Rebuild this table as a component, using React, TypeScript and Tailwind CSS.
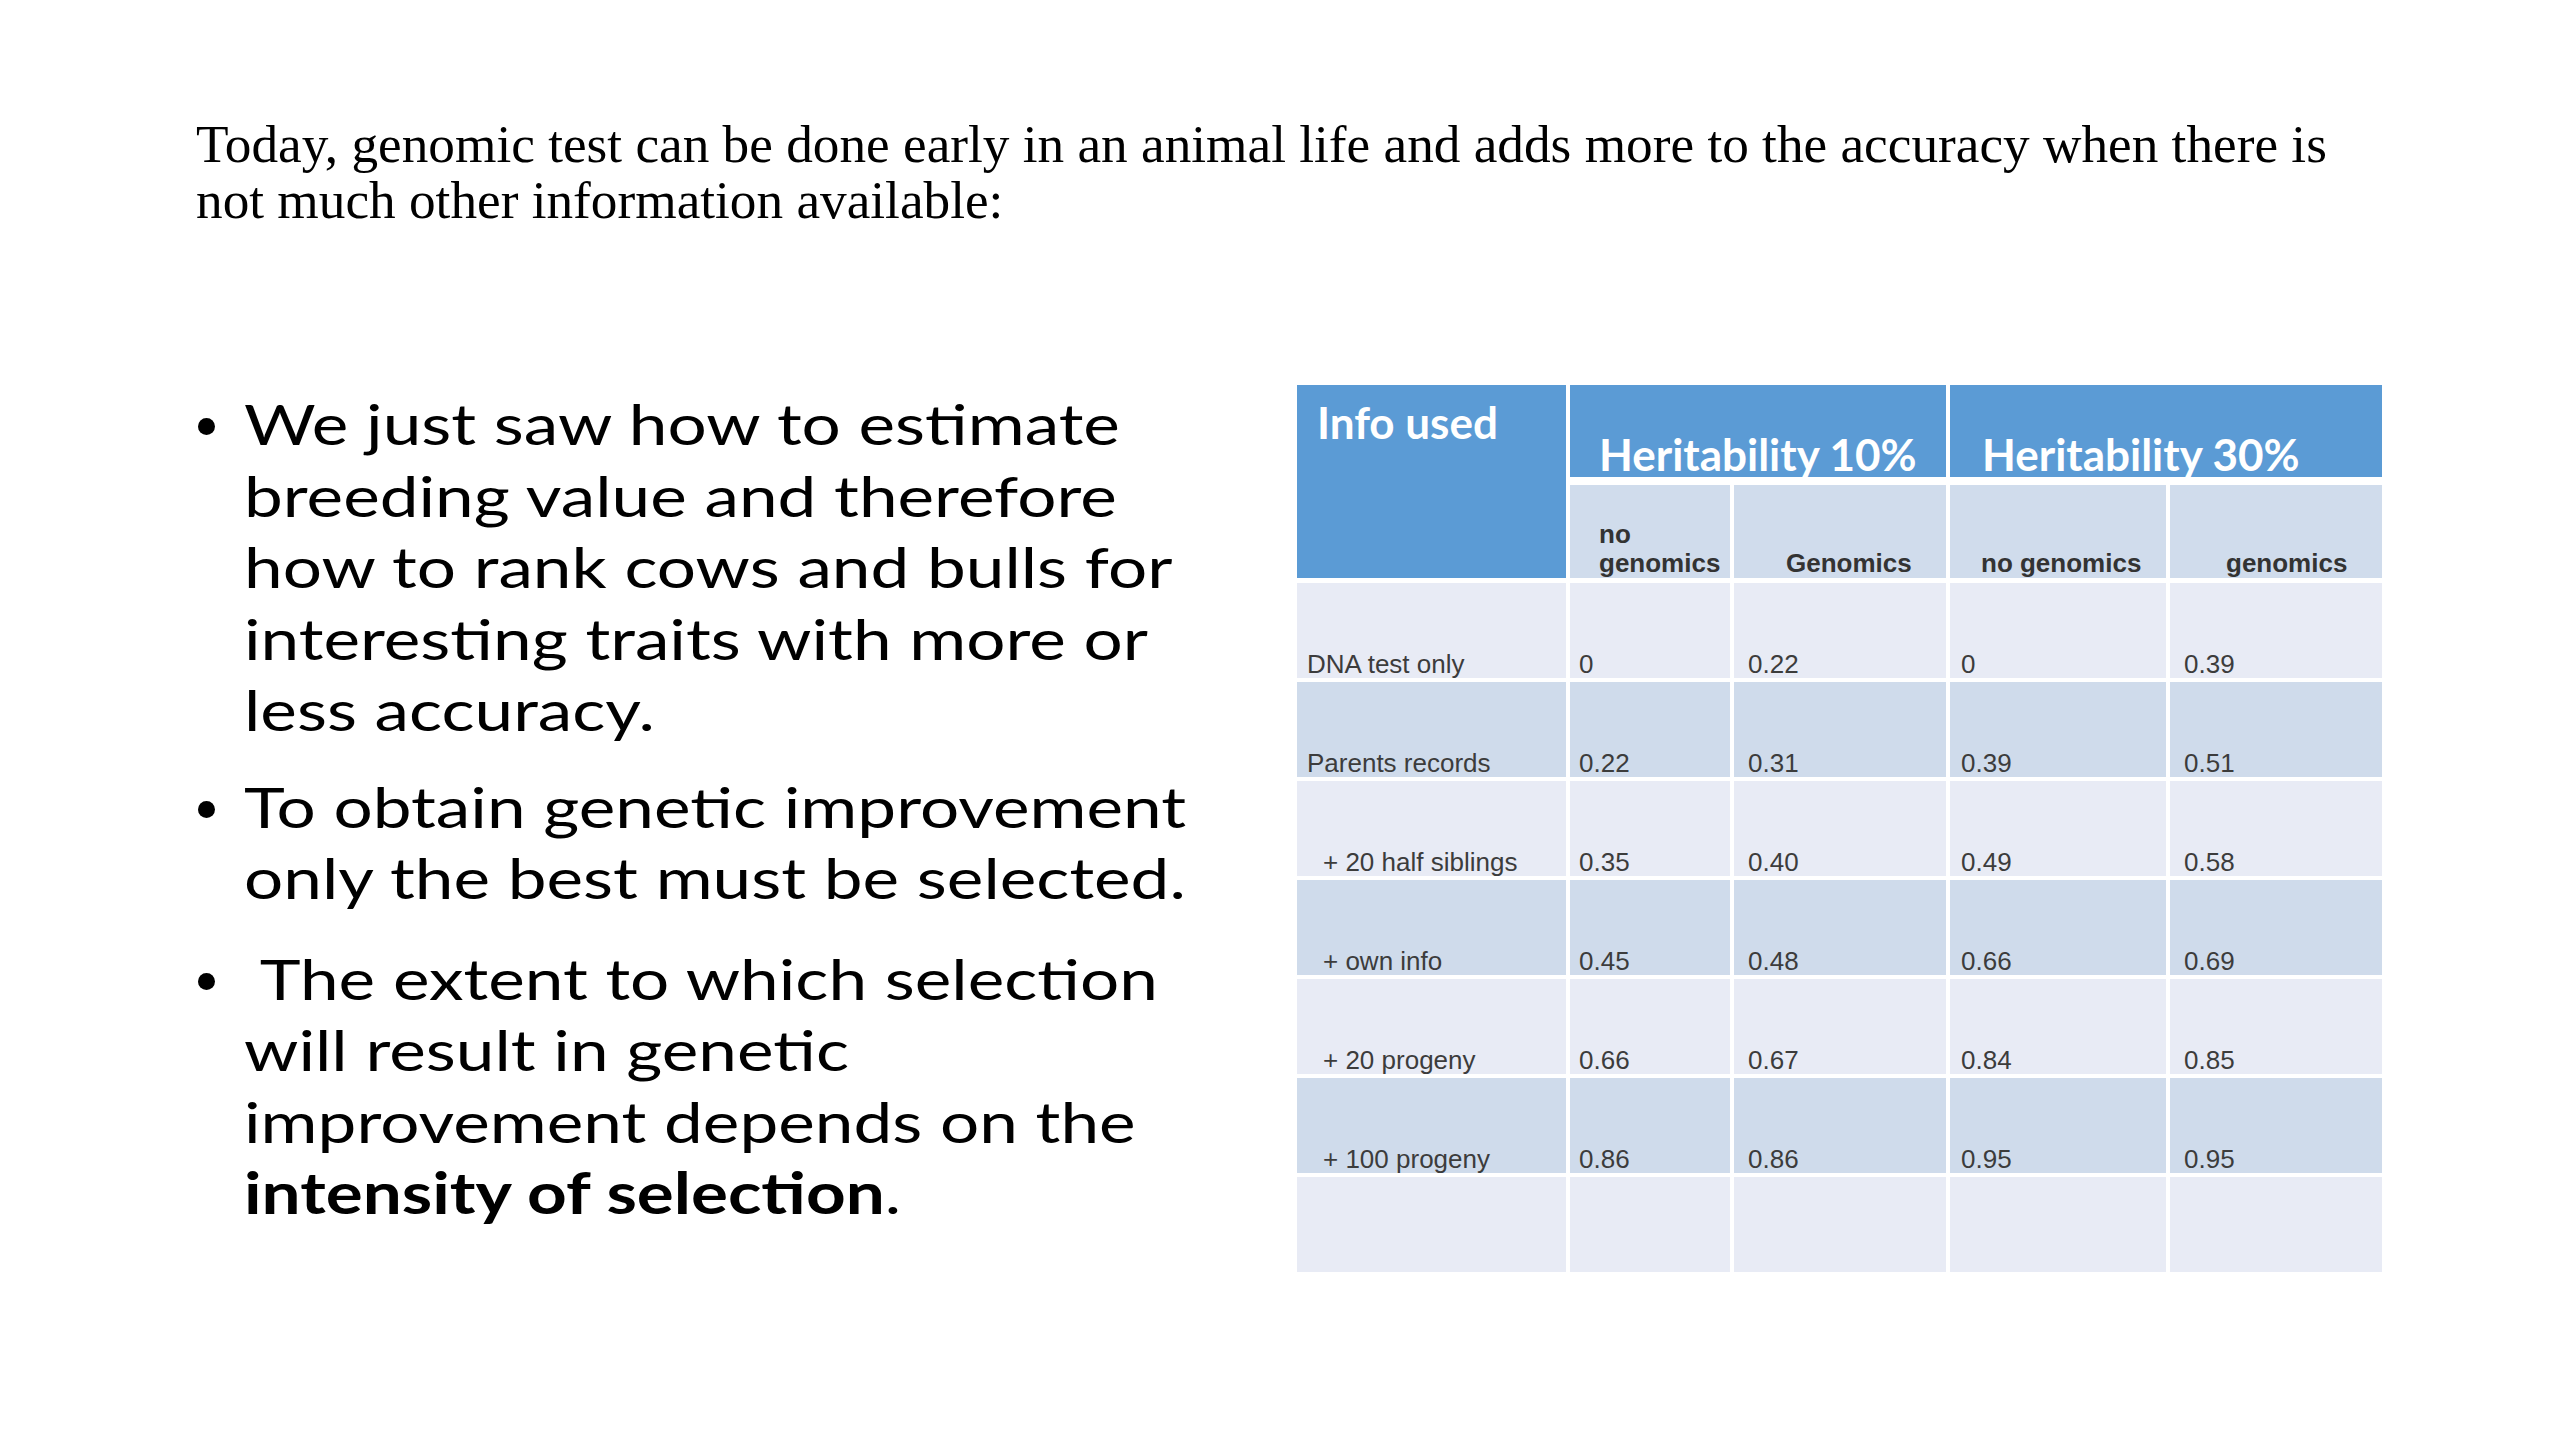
import React from 'react';

type Row = { label: string; indent?: boolean; values: string[]; shade: 'light' | 'dark' };

const rows: Row[] = [
  { label: 'DNA test only', values: ['0', '0.22', '0', '0.39'], shade: 'light' },
  { label: 'Parents records', values: ['0.22', '0.31', '0.39', '0.51'], shade: 'dark' },
  { label: '+ 20 half siblings', indent: true, values: ['0.35', '0.40', '0.49', '0.58'], shade: 'light' },
  { label: '+ own info', indent: true, values: ['0.45', '0.48', '0.66', '0.69'], shade: 'dark' },
  { label: '+ 20 progeny', indent: true, values: ['0.66', '0.67', '0.84', '0.85'], shade: 'light' },
  { label: '+ 100 progeny', indent: true, values: ['0.86', '0.86', '0.95', '0.95'], shade: 'dark' },
  { label: '', values: ['', '', '', ''], shade: 'light' },
];

// left padding of each value column, taken from the slide
const valuePad = ['pl-[9px]', 'pl-[14px]', 'pl-[11px]', 'pl-[14px]'];

const calibri = "font-['Lato','Noto_Sans',sans-serif]";
const helvetica = "font-['Liberation_Sans','Arial',sans-serif]";

function Bullet({ children, className = '' }: { children: React.ReactNode; className?: string }) {
  return (
    <li className={`flex ${className}`}>
      <div className="w-[46px] shrink-0">
        <div className="mt-[30px] h-[17px] w-[17px] rounded-full bg-black" />
      </div>
      {/* the slide's body text is set wide, so stretch it a little */}
      <div className="flex origin-left scale-x-[1.215] flex-col">{children}</div>
    </li>
  );
}

function Line({ children }: { children: React.ReactNode }) {
  return <span className="block whitespace-nowrap">{children}</span>;
}

function AccuracyTable() {
  return (
    <div className={`${helvetica} w-[1085px] shrink-0`}>
      {/* header */}
      <div className="grid grid-cols-[269px_160px_212px_216px_212px] grid-rows-[92px_93px] gap-x-[4px] gap-y-[8px]">
        <div className={`${calibri} row-span-2 bg-[#5b9bd5] pl-[20px] pt-[13px] text-[44px] font-bold leading-[48px] text-white`}>
          Info used
        </div>
        <div className={`${calibri} relative z-10 col-span-2 flex items-end bg-[#5b9bd5] pl-[29px] text-[44px] font-bold leading-[48px] text-white`}>
          <span className="translate-y-[1px] whitespace-nowrap">Heritability 10%</span>
        </div>
        <div className={`${calibri} relative z-10 col-span-2 flex items-end bg-[#5b9bd5] pl-[32px] text-[44px] font-bold leading-[48px] text-white`}>
          <span className="translate-y-[1px] whitespace-nowrap">Heritability 30%</span>
        </div>
        <div className="flex items-end bg-[#d0dcec] pl-[29px] text-[26px] font-bold leading-[29px] text-[#333]">
          <span>
            no
            <br />
            genomics
          </span>
        </div>
        <div className="flex items-end bg-[#d0dcec] pl-[52px] text-[26px] font-bold leading-[29px] text-[#333]">
          Genomics
        </div>
        <div className="flex items-end bg-[#d0dcec] pl-[31px] text-[26px] font-bold leading-[29px] text-[#333]">
          no genomics
        </div>
        <div className="flex items-end bg-[#d0dcec] pl-[56px] text-[26px] font-bold leading-[29px] text-[#333]">
          genomics
        </div>
      </div>

      {/* body */}
      <div className="mt-[5px] grid grid-cols-[269px_160px_212px_216px_212px] auto-rows-[95px] gap-x-[4px] gap-y-[4px]">
        {rows.map((row, i) => {
          const bg = row.shade === 'light' ? 'bg-[#e8ebf5]' : 'bg-[#cfdbeb]';
          return (
            <React.Fragment key={i}>
              <div className={`${bg} flex items-end ${row.indent ? 'pl-[26px]' : 'pl-[10px]'} text-[26px] leading-[28px] text-[#3c3c3c]`}>
                {row.label}
              </div>
              {row.values.map((v, j) => (
                <div key={j} className={`${bg} flex items-end ${valuePad[j]} text-[26px] leading-[28px] text-[#3c3c3c]`}>
                  {v}
                </div>
              ))}
            </React.Fragment>
          );
        })}
      </div>
    </div>
  );
}

export default function App() {
  return (
    <div className="h-[1440px] w-[2560px] overflow-hidden bg-white text-black">
      <p className="pl-[196px] pt-[117px] font-['Liberation_Serif','Times_New_Roman',serif] text-[53.25px] leading-[56px]">
        <Line>Today, genomic test can be done early in an animal life and adds more to the accuracy when there is</Line>
        <Line>not much other information available:</Line>
      </p>

      <div className="mt-[156px] flex pl-[198px]">
        <ul className={`${calibri} mt-[3px] w-[1099px] shrink-0 text-[57px] leading-[71.5px]`}>
          <Bullet>
            <Line>We just saw how to estimate</Line>
            <Line>breeding value and therefore</Line>
            <Line>how to rank cows and bulls for</Line>
            <Line>interesting traits with more or</Line>
            <Line>less accuracy.</Line>
          </Bullet>
          <Bullet className="mt-[25px]">
            <Line>To obtain genetic improvement</Line>
            <Line>only the best must be selected.</Line>
          </Bullet>
          <Bullet className="mt-[29px]">
            <Line>{'\u00a0'}The extent to which selection</Line>
            <Line>will result in genetic</Line>
            <Line>improvement depends on the</Line>
            <Line>
              <b>intensity of selection</b>.
            </Line>
          </Bullet>
        </ul>
        <div className="-ml-[0px]">
          <AccuracyTable />
        </div>
      </div>
    </div>
  );
}
